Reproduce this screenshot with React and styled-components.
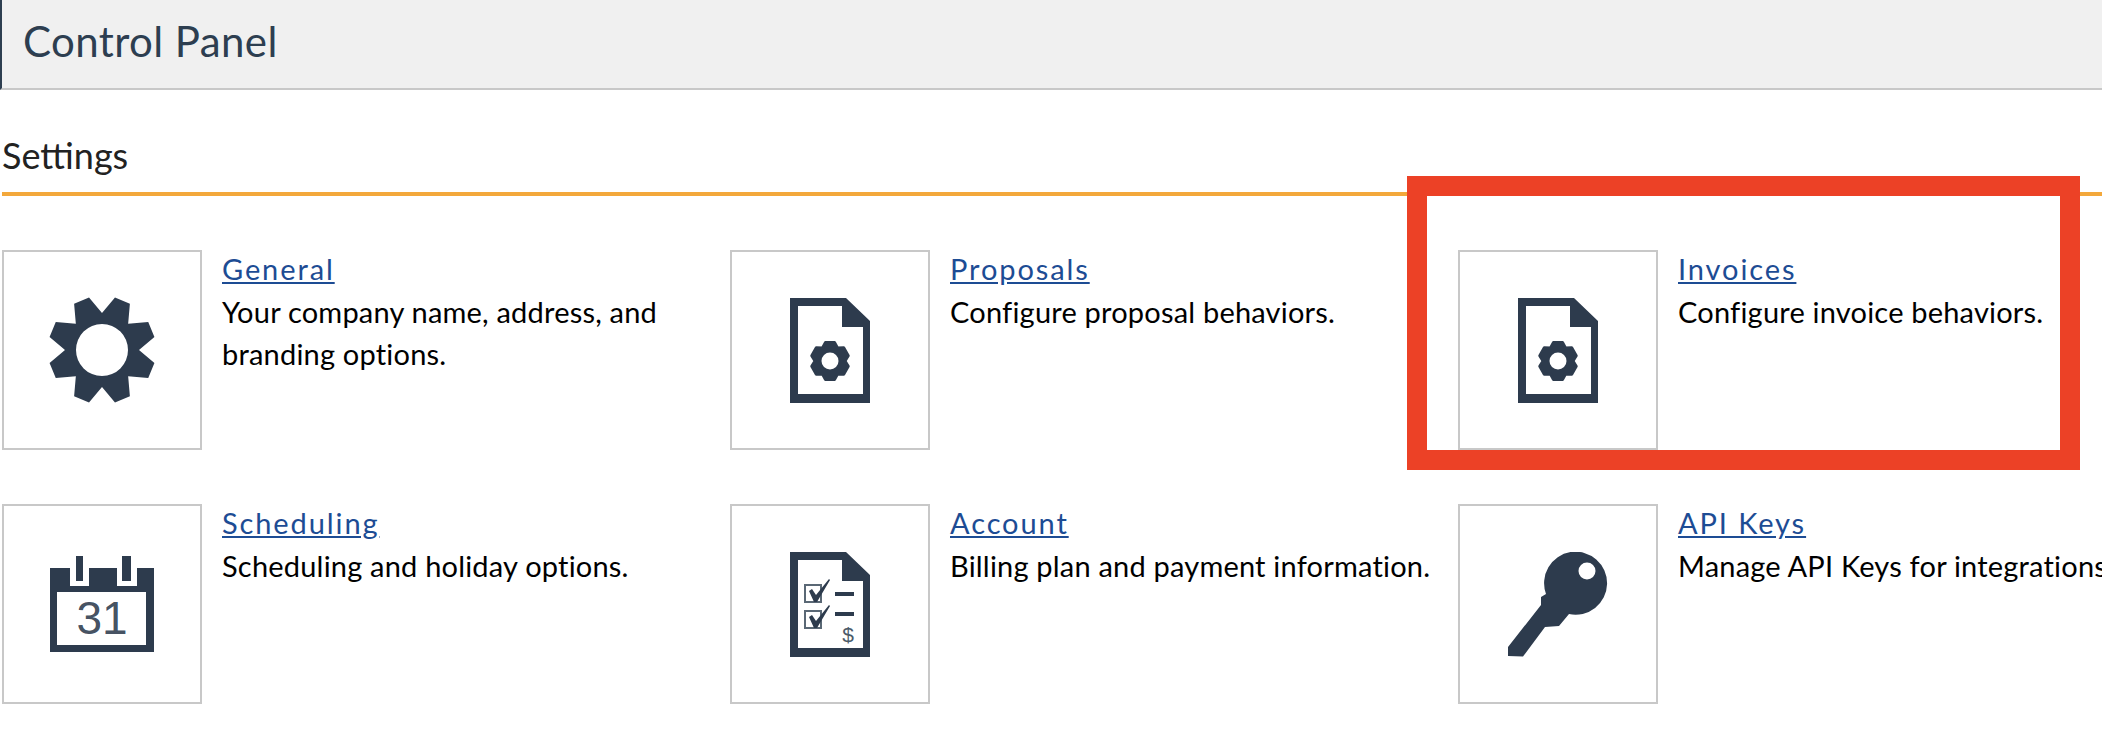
import React from 'react';
import styled, { createGlobalStyle } from 'styled-components';

const GlobalStyle = createGlobalStyle`
  html, body {
    margin: 0;
    padding: 0;
    background: #fff;
    overflow: hidden;
  }
  * { box-sizing: border-box; }
`;

const Page = styled.div`
  position: relative;
  width: 2102px;
  height: 752px;
  overflow: hidden;
  font-family: "Lato", "Open Sans", sans-serif;
  color: #000;
`;

const Header = styled.div`
  height: 90px;
  background: #f0f0f0;
  border-left: 2px solid #2d3e50;
  border-bottom: 2px solid #c8c8c8;
  padding: 0 0 7px 21px;
  display: flex;
  align-items: center;
`;

const Title = styled.h1`
  margin: 0;
  font-size: 42px;
  font-weight: 400;
  letter-spacing: 0.4px;
  color: #2d3e50;
`;

const Section = styled.div`
  padding: 45px 0 0 2px;
`;

const SectionTitle = styled.h2`
  margin: 0;
  font-size: 36px;
  line-height: 40px;
  font-weight: 400;
  color: #222;
  padding-bottom: 17px;
  border-bottom: 4px solid #f3a83b;
`;

const Grid = styled.div`
  display: grid;
  grid-template-columns: repeat(3, 728px);
  row-gap: 54px;
  padding-top: 54px;
`;

const Item = styled.div`
  display: flex;
  gap: 20px;
`;

const IconBox = styled.div`
  flex: none;
  width: 200px;
  height: 200px;
  border: 2px solid #c8c8c8;
  display: flex;
  align-items: center;
  justify-content: center;
  color: #2d3b4d;
`;

const Body = styled.div`
  margin-top: -1px;
  white-space: pre;
`;

const ItemLink = styled.a`
  display: block;
  width: fit-content;
  margin-bottom: 2px;
  font-size: 29px;
  line-height: 40px;
  letter-spacing: 1.9px;
  color: #1d4c94;
  text-decoration: underline;
`;

const ItemText = styled.div`
  font-size: 29px;
  line-height: 42px;
  letter-spacing: 0.2px;
  color: #000;
`;

const Highlight = styled.div`
  position: absolute;
  left: 1407px;
  top: 176px;
  width: 673px;
  height: 294px;
  border: 20px solid #ec4126;
  pointer-events: none;
`;

// outline of a cog: teeth flat at the tip, v shaped valleys between them
const cogPath = (cx, cy, teeth, tip, valley, halfTip, start) => {
  const step = (Math.PI * 2) / teeth;
  const pt = (r, a) => `${(cx + r * Math.sin(a)).toFixed(2)} ${(cy - r * Math.cos(a)).toFixed(2)}`;
  let d = '';
  for (let i = 0; i < teeth; i++) {
    const a = start + i * step;
    d += `${i === 0 ? 'M' : 'L'}${pt(tip, a - halfTip)}L${pt(tip, a + halfTip)}L${pt(valley, a + step / 2)}`;
  }
  return `${d}Z`;
};

const hole = (cx, cy, r) => `M${cx} ${cy - r}a${r} ${r} 0 1 0 0 ${r * 2}a${r} ${r} 0 1 0 0-${r * 2}z`;

const GearIcon = () => (
  <svg width="106" height="106" viewBox="0 0 106 106">
    <path
      fill="currentColor"
      fillRule="evenodd"
      d={cogPath(53, 53, 8, 54, 37, 0.15, Math.PI / 8) + hole(53, 53, 26)}
    />
  </svg>
);

const DOC_OUTLINE = 'M0 0H56L80 23V105H0ZM8 8V96H73V29H52V8Z';

const DocGearIcon = () => (
  <svg width="80" height="105" viewBox="0 0 80 105">
    <path fill="currentColor" fillRule="evenodd" d={DOC_OUTLINE} />
    <path
      fill="currentColor"
      stroke="currentColor"
      strokeWidth="3"
      strokeLinejoin="round"
      d={cogPath(40, 63, 6, 19, 15, 0.24, 0)}
    />
    <circle cx="40" cy="63" r="8.5" fill="#fff" />
  </svg>
);

const CalendarIcon = () => (
  <svg width="104" height="96" viewBox="0 0 104 96">
    <path
      fill="currentColor"
      fillRule="evenodd"
      d="M0 12H20V30H39V12H67V30H87V12H104V96H0ZM7 36V89H96V36Z"
    />
    <path fill="currentColor" d="M26 0H33V25H26ZM72 0H81V25H72Z" />
    <text x="52" y="78" textAnchor="middle" fontFamily="Liberation Sans" fontSize="46" fill="currentColor" fillOpacity="0.9">31</text>
  </svg>
);

const BillIcon = () => (
  <svg width="80" height="105" viewBox="0 0 80 105">
    <path fill="currentColor" fillRule="evenodd" d={DOC_OUTLINE} />
    <path fill="none" stroke="#5a6875" strokeWidth="2" d="M15 33H31V50H15ZM15 59H31V76H15Z" />
    <path fill="currentColor" d="M19 39L22 37L26 43L39 27L40 28L27 50H24ZM19 65L22 63L26 69L39 53L40 54L27 76H24Z" />
    <path fill="currentColor" d="M45 40H64V44H45ZM45 60H64V64H45Z" />
    <text x="58" y="90" textAnchor="middle" fontFamily="Liberation Sans" fontSize="21" fill="#4b5a69">$</text>
  </svg>
);

const KeyIcon = () => (
  <svg width="102" height="105" viewBox="0 0 102 105">
    <path
      fill="currentColor"
      fillRule="evenodd"
      d={`M34 45L39 42A31.5 31.5 0 1 1 62 62L52 74L38 75L16 104.5L1 104V95L34 53Z${hole(80, 19, 8.5)}`}
    />
  </svg>
);

const items = [
  { title: 'General', text: 'Your company name, address, and\nbranding options.', icon: <GearIcon /> },
  { title: 'Proposals', text: 'Configure proposal behaviors.', icon: <DocGearIcon /> },
  { title: 'Invoices', text: 'Configure invoice behaviors.', icon: <DocGearIcon /> },
  { title: 'Scheduling', text: 'Scheduling and holiday options.', icon: <CalendarIcon /> },
  { title: 'Account', text: 'Billing plan and payment information.', icon: <BillIcon /> },
  { title: 'API Keys', text: 'Manage API Keys for integrations.', icon: <KeyIcon /> },
];

const App = () => (
  <Page>
    <GlobalStyle />
    <Header>
      <Title>Control Panel</Title>
    </Header>
    <Section>
      <SectionTitle>Settings</SectionTitle>
      <Grid>
        {items.map((item) => (
          <Item key={item.title}>
            <IconBox>{item.icon}</IconBox>
            <Body>
              <ItemLink href="#">{item.title}</ItemLink>
              <ItemText>{item.text}</ItemText>
            </Body>
          </Item>
        ))}
      </Grid>
    </Section>
    <Highlight />
  </Page>
);

export default App;
